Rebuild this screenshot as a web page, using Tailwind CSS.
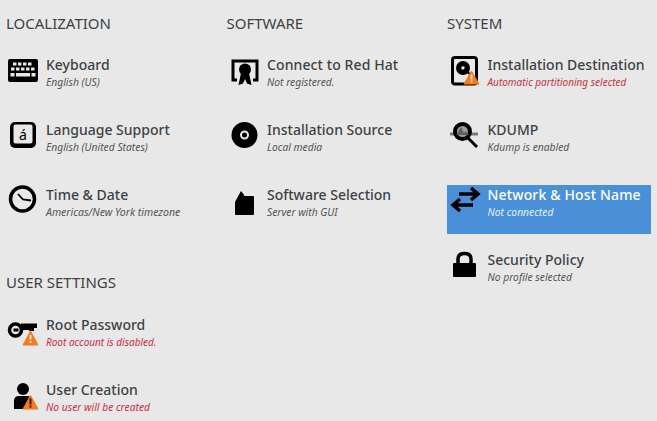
<!DOCTYPE html>
<html>
<head>
<meta charset="utf-8">
<script src="https://cdn.jsdelivr.net/npm/@tailwindcss/browser@4"></script>
</head>
<body class="m-0 h-[421px] w-[657px] overflow-hidden bg-[#e8e8e8] font-['Noto_Sans',sans-serif] text-[#3e4245]">
<div class="grid grid-cols-[220.5px_220.5px_210px] pl-[6px] pt-[14px]">

<section class="flex flex-col">
  <h2 class="h-[41px] text-[15px] leading-[19px]">LOCALIZATION</h2>
  <div class="flex flex-col gap-[16px]">
    <a class="flex h-[49px] w-[204px]">
      <svg class="h-[40px] w-[40px] shrink-0" viewBox="0 0 40 40"><rect x="2" y="4" width="30" height="23" rx="2" fill="#000"/><g fill="#e8e8e8"><rect x="7" y="7.500" width="3.500" height="3"/><rect x="12" y="7.500" width="3.500" height="3"/><rect x="17" y="7.500" width="3.500" height="3"/><rect x="22" y="7.500" width="3.500" height="3"/><rect x="5" y="12.500" width="3.500" height="3"/><rect x="10" y="12.500" width="3.500" height="3"/><rect x="15" y="12.500" width="3.500" height="3"/><rect x="20" y="12.500" width="3.500" height="3"/><rect x="25" y="12.500" width="3.500" height="3"/><rect x="4.500" y="18" width="4" height="3.500"/><rect x="10" y="18" width="14" height="3.500"/><rect x="25.500" y="18" width="4" height="3.500"/></g></svg>
      <div><div class="text-[14px] leading-[20px] font-medium">Keyboard</div><div class="text-[10.3px] leading-[14px] italic text-[#555]">English (US)</div></div>
    </a>
    <a class="flex h-[49px] w-[204px]">
      <svg class="h-[40px] w-[40px] shrink-0" viewBox="0 0 40 40"><rect x="4" y="2" width="26" height="26" rx="5" fill="#000"/><rect x="7.500" y="4.500" width="19" height="19" rx="2" fill="#e8e8e8"/><text x="17" y="19.500" text-anchor="middle" font-size="14" font-family="Noto Sans" fill="#000">á</text></svg>
      <div><div class="text-[14px] leading-[20px] font-medium">Language Support</div><div class="text-[10.3px] leading-[14px] italic text-[#555]">English (United States)</div></div>
    </a>
    <a class="flex h-[49px] w-[204px]">
      <svg class="h-[40px] w-[40px] shrink-0" viewBox="0 0 40 40"><circle cx="16.500" cy="14" r="12" fill="none" stroke="#000" stroke-width="3.500"/><path d="M12 9 L17 14.500 L25 15.500" fill="none" stroke="#000" stroke-width="1.800"/></svg>
      <div><div class="text-[14px] leading-[20px] font-medium">Time &amp; Date</div><div class="text-[10.5px] leading-[14px] italic text-[#555]">Americas/New York timezone</div></div>
    </a>
  </div>
  <h2 class="mt-[39px] h-[42px] text-[15px] leading-[19px]">USER SETTINGS</h2>
  <div class="flex flex-col gap-[16px]">
    <a class="flex h-[49px] w-[204px]">
      <svg class="h-[40px] w-[40px] shrink-0" viewBox="0 0 40 40"><circle cx="9.500" cy="15" r="6" fill="none" stroke="#000" stroke-width="3.500"/><rect x="7.500" y="13.500" width="5" height="3" fill="#000"/><path d="M15 8.500 H31 V13 H28 V16 H23 V15 H15 Z" fill="#000"/><path d="M24.500 16 L32 30 H17 Z" fill="#f47b20" stroke="#f47b20" stroke-linejoin="round"/><rect x="23.700" y="20" width="1.700" height="4.500" fill="#f7e8d8"/><rect x="23.700" y="26" width="1.700" height="2" fill="#f7e8d8"/></svg>
      <div><div class="text-[14px] leading-[20px] font-medium">Root Password</div><div class="text-[10px] leading-[14px] italic text-[#c8303f]">Root account is disabled.</div></div>
    </a>
    <a class="flex h-[49px] w-[204px]">
      <svg class="h-[40px] w-[40px] shrink-0" viewBox="0 0 40 40"><circle cx="17" cy="9" r="6" fill="#000"/><path d="M8 29 V21 Q8 16 13 16 H21 Q26 16 26 21 V29 Z" fill="#000"/><path d="M24.500 15.500 L32 29 H17 Z" fill="#f47b20" stroke="#f47b20" stroke-linejoin="round"/><rect x="23.500" y="18.500" width="2" height="6" fill="#4a1a00"/><rect x="23.500" y="25.500" width="2" height="2" fill="#4a1a00"/></svg>
      <div><div class="text-[14px] leading-[20px] font-medium">User Creation</div><div class="text-[10.3px] leading-[14px] italic text-[#c8303f]">No user will be created</div></div>
    </a>
  </div>
</section>

<section class="flex flex-col">
  <h2 class="h-[41px] text-[15px] leading-[19px]">SOFTWARE</h2>
  <div class="flex flex-col gap-[16px]">
    <a class="flex h-[49px] w-[204px]">
      <svg class="h-[40px] w-[40px] shrink-0" viewBox="0 0 40 40"><path d="M10 25 H6 V6 H30 V25 H26" fill="none" stroke="#000" stroke-width="3"/><circle cx="18" cy="14.500" r="6" fill="#000"/><path d="M14 18 L11.500 30 L16 28.500 L18 24 L20 28.500 L24.500 30 L22 18 Z" fill="#000"/></svg>
      <div class="pl-[0.5px]"><div class="text-[14px] leading-[20px] font-medium tracking-[0.1px]">Connect to Red Hat</div><div class="text-[10.3px] leading-[14px] italic text-[#555]">Not registered.</div></div>
    </a>
    <a class="flex h-[49px] w-[204px]">
      <svg class="h-[40px] w-[40px] shrink-0" viewBox="0 0 40 40"><circle cx="17.500" cy="15" r="13" fill="#000"/><circle cx="17.500" cy="15" r="3.500" fill="none" stroke="#e8e8e8" stroke-width="2"/></svg>
      <div class="pl-[0.5px]"><div class="text-[14px] leading-[20px] font-medium">Installation Source</div><div class="text-[10.3px] leading-[14px] italic text-[#555]">Local media</div></div>
    </a>
    <a class="flex h-[49px] w-[204px]">
      <svg class="h-[40px] w-[40px] shrink-0" viewBox="0 0 40 40"><path d="M8 17 L14 6 L17.500 10.500 L14 12 L15.500 11 H26 Q27 11 27 12 V29 Q27 30 26 30 H9 Q8 30 8 29 Z" fill="#000"/></svg>
      <div class="pl-[0.5px]"><div class="text-[14px] leading-[20px] font-medium">Software Selection</div><div class="text-[10.3px] leading-[14px] italic text-[#555]">Server with GUI</div></div>
    </a>
  </div>
</section>

<section class="flex flex-col">
  <h2 class="h-[41px] text-[15px] leading-[19px]">SYSTEM</h2>
  <div class="flex flex-col gap-[16px]">
    <a class="flex h-[49px] w-[204px]">
      <svg class="h-[40px] w-[40px] shrink-0" viewBox="0 0 40 40"><rect x="5.500" y="2.500" width="24" height="26.500" rx="2.500" fill="none" stroke="#000" stroke-width="3"/><circle cx="16" cy="13" r="7" fill="#000"/><circle cx="16" cy="13" r="1.800" fill="#e8e8e8"/><path d="M17 14 L25 21" stroke="#000" stroke-width="2"/><path d="M24.500 16 L32 29 H17 Z" fill="#f47b20" stroke="#f47b20" stroke-linejoin="round"/><rect x="23.700" y="19.500" width="1.700" height="5" fill="#f7e8d8"/><rect x="23.700" y="25.500" width="1.700" height="2" fill="#f7e8d8"/></svg>
      <div class="pl-[0.5px]"><div class="text-[14px] leading-[20px] font-medium">Installation Destination</div><div class="text-[10px] leading-[14px] italic text-[#c8303f]">Automatic partitioning selected</div></div>
    </a>
    <a class="flex h-[49px] w-[204px]">
      <svg class="h-[40px] w-[40px] shrink-0" viewBox="0 0 40 40"><rect x="3" y="12.500" width="28" height="3" fill="#7a7a7a"/><circle cx="15.500" cy="11.500" r="7.500" fill="#a0a0a0" stroke="#000" stroke-width="4"/><path d="M9.500 15 L14 7 L17 13 L19 11 L22 15 Z" fill="#5f5f5f"/><path d="M20.500 17.500 L30 27" stroke="#000" stroke-width="3"/></svg>
      <div class="pl-[0.5px]"><div class="text-[14px] leading-[20px] font-medium">KDUMP</div><div class="text-[10.3px] leading-[14px] italic text-[#555]">Kdump is enabled</div></div>
    </a>
    <a class="flex h-[49px] w-[204px] bg-[#4a90d9] text-white">
      <svg class="h-[40px] w-[40px] shrink-0" viewBox="0 0 40 40"><path d="M12 9 H30 M24 3 L31 9 L24 15" fill="none" stroke="#000" stroke-width="3.500"/><path d="M26 20 H6 M13 14 L6 20 L13 26" fill="none" stroke="#000" stroke-width="3.500"/></svg>
      <div class="pl-[0.5px]"><div class="text-[14px] leading-[20px] font-medium tracking-[0.15px]">Network &amp; Host Name</div><div class="text-[10.3px] leading-[14px] italic text-[#e8eef7]">Not connected</div></div>
    </a>
    <a class="flex h-[49px] w-[204px]">
      <svg class="h-[40px] w-[40px] shrink-0" viewBox="0 0 40 40"><path d="M11 14 V9 Q11 3.500 17.500 3.500 Q24 3.500 24 9 V14" fill="none" stroke="#000" stroke-width="3.500"/><rect x="6" y="13" width="23" height="14" rx="1" fill="#000"/></svg>
      <div class="pl-[0.5px]"><div class="text-[14px] leading-[20px] font-medium">Security Policy</div><div class="text-[10.3px] leading-[14px] italic text-[#555]">No profile selected</div></div>
    </a>
  </div>
</section>

</div>
</body>
</html>
